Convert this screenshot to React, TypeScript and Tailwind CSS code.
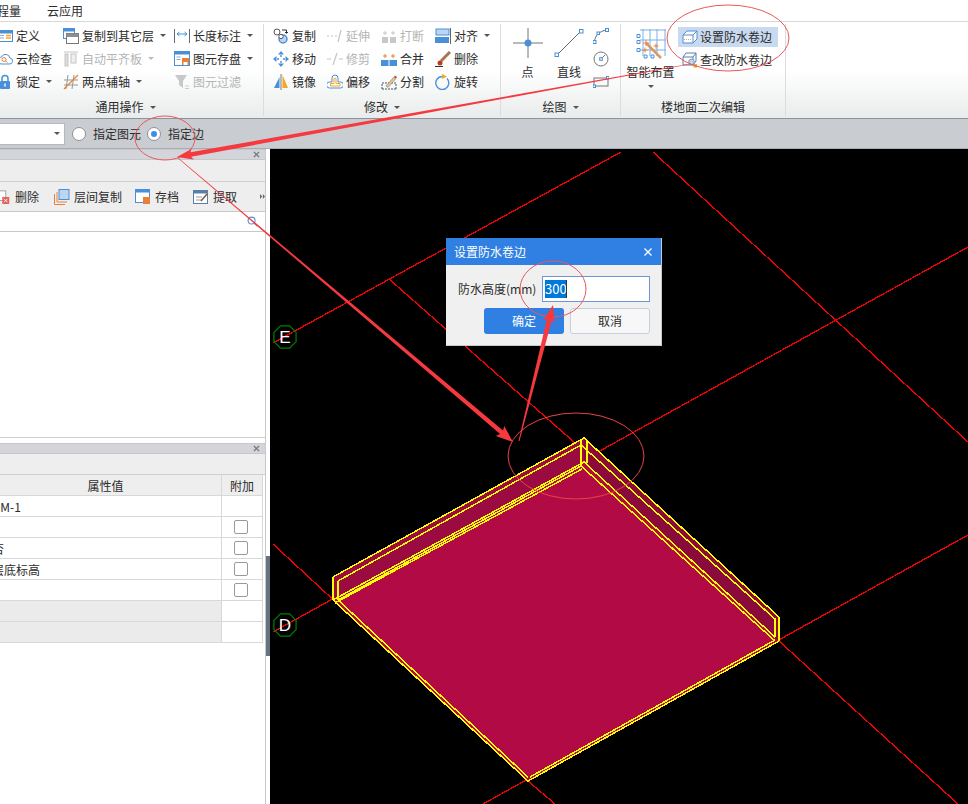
import type { ReactNode } from 'react';

const BLUE = '#4a90d9';
const ORANGE = '#f5a623';
const GRAY = '#c4c4c4';

function Ico({ children, className = 'w-4 h-4' }: { children: ReactNode; className?: string }) {
  return (
    <svg viewBox="0 0 16 16" className={`${className} shrink-0`} fill="none">
      {children}
    </svg>
  );
}

function Caret({ className = '' }: { className?: string }) {
  return <span className={`inline-block w-0 h-0 border-x-[3px] border-x-transparent border-t-[3px] border-t-[#555] ${className}`} />;
}

const icons: Record<string, ReactNode> = {
  define: (
    <>
      <rect x="0.5" y="2.5" width="15" height="11" fill="#fff" stroke={BLUE} />
      <rect x="0.5" y="2.5" width="15" height="3" fill={BLUE} />
      <path d="M9 7.5h5M9 10h5" stroke={ORANGE} strokeWidth="1.4" />
      <path d="M2 7.5h5M2 10h5" stroke="#9ab" />
    </>
  ),
  cloud: (
    <>
      <path d="M4 13h8a3 3 0 0 0 1-6 4.5 4.5 0 0 0-8.500-1A3.500 3.500 0 0 0 4 13z" stroke={BLUE} fill="#fff" />
      <circle cx="7" cy="8.500" r="2" stroke="#e8803a" />
      <path d="M8.500 10l2 1.500" stroke="#e8803a" />
    </>
  ),
  lock: (
    <>
      <path d="M5 7V4.500a3 3 0 0 1 6 0V7" stroke={BLUE} strokeWidth="1.500" />
      <rect x="3" y="7" width="10" height="8" rx="1" fill={BLUE} />
      <rect x="7.300" y="9.500" width="1.400" height="3" fill="#fff" />
    </>
  ),
  copyLayer: (
    <>
      <rect x="0.500" y="0.500" width="11" height="10" fill="#fff" stroke={BLUE} />
      <rect x="0.500" y="0.500" width="11" height="3" fill={BLUE} />
      <rect x="3.500" y="5.500" width="12" height="10" fill="#fff" stroke="#777" />
      <rect x="3.500" y="5.500" width="12" height="3.500" fill="#8a8f96" />
    </>
  ),
  autoFlush: (
    <>
      <path d="M1 1h14" stroke={GRAY} />
      <rect x="2" y="3" width="3" height="12" fill="#ddd" stroke={GRAY} />
      <rect x="8" y="3" width="5" height="9" fill="#eee" stroke={GRAY} />
    </>
  ),
  twoPoint: (
    <>
      <path d="M5 1l-2 14M11 1L9 15M1 6h14M1 11h14" stroke="#999" />
      <path d="M1 15L15 1" stroke="#e8803a" strokeWidth="1.200" />
    </>
  ),
  lengthMark: (
    <>
      <path d="M0.500 1v14M15.500 1v14" stroke="#5a6a7a" />
      <path d="M3 6h10M3 6l2.500-2M3 6l2.500 2M13 6l-2.500-2M13 6l-2.500 2" stroke={BLUE} />
    </>
  ),
  saveEl: (
    <>
      <rect x="0.500" y="0.500" width="15" height="14" fill="#fff" stroke={BLUE} />
      <rect x="0.500" y="0.500" width="15" height="3" fill={BLUE} />
      <path d="M2.500 6h4M2.500 8.500h4" stroke="#9ab" />
      <rect x="8" y="7" width="7" height="7" fill="#e8803a" />
      <rect x="9.500" y="11" width="4" height="3" fill="#fff" />
    </>
  ),
  funnel: (
    <>
      <path d="M1 1h12L9 7v7L5 11V7z" fill="#c8c8c8" />
      <path d="M11 12h4M11 14.500h4" stroke="#ccc" />
    </>
  ),
  copy: (
    <>
      <circle cx="4" cy="4" r="3" fill="#fff" stroke="#555" />
      <circle cx="10" cy="11" r="4" fill="#bcd6f2" stroke={BLUE} strokeWidth="1.500" />
      <circle cx="8" cy="8.500" r="2.200" fill="#fff" stroke="#555" />
      <path d="M9 2h4.500v3M12 4l1.500 1.500L15 4" stroke="#333" />
    </>
  ),
  extend: <path d="M0 8h2M4 8h2M8 8h2M14 2l-3 12" stroke={GRAY} strokeWidth="1.200" />,
  trim: <path d="M0 8h4M12 8h4M10 2L6 14" stroke={GRAY} strokeWidth="1.200" />,
  breakIcon: (
    <>
      <rect x="1" y="9" width="6" height="6" fill="#c8c8c8" />
      <rect x="9" y="9" width="6" height="6" fill="#c8c8c8" />
      <path d="M4 3v4M2 5h4M12 3v4M10 5h4" stroke="#c8c8c8" />
    </>
  ),
  merge: (
    <>
      <rect x="0" y="9" width="16" height="6" fill={BLUE} />
      <path d="M8 9v6" stroke="#fff" />
      <path d="M4 3v4M2 5h4M12 3v4M10 5h4" stroke="#e8803a" />
    </>
  ),
  align: (
    <>
      <rect x="1" y="1" width="13" height="6" fill="#bcd6f2" stroke={BLUE} />
      <rect x="0" y="9" width="14" height="6" fill={BLUE} />
      <path d="M15.500 0v16" stroke="#666" />
    </>
  ),
  erase: (
    <>
      <path d="M0 15.500h8" stroke="#333" />
      <path d="M15 1l-9 9" stroke="#a8764a" strokeWidth="3" />
      <circle cx="5" cy="12" r="2.500" fill="#b5401f" />
    </>
  ),
  move: (
    <>
      <path d="M8 0l3 3.500H5zM8 16l3-3.500H5zM0 8l3.500-3v6zM16 8l-3.500-3v6z" fill={BLUE} />
      <path d="M8 4v2M8 10v2M4 8h2M10 8h2" stroke={BLUE} strokeWidth="1.400" />
    </>
  ),
  mirror: (
    <>
      <path d="M6.500 3L1 14h5.500z" fill={BLUE} />
      <path d="M9.500 1L15 14H9.500z" fill={ORANGE} />
      <path d="M8 0v16" stroke="#777" />
    </>
  ),
  offset: (
    <>
      <path d="M5 8V4a3 3 0 0 1 6 0v4h2.500a2 2 0 0 1 0 6h-11a2 2 0 0 1 0-6z" stroke={BLUE} fill="#fff" />
      <path d="M7 9.500V5a1 1 0 0 1 2 0v4.500h4v2.500H3.500V9.500z" stroke={ORANGE} fill="#fff" />
    </>
  ),
  split: (
    <>
      <path d="M1 15h14M1 15V9M15 15V9M1 9h14" stroke="#44536a" strokeDasharray="2 1" />
      <path d="M5 12L13 3l2 1.500-8 9z" fill="#e9c58a" stroke="#777" strokeWidth="0.600" />
      <path d="M13 3l2 1.500 1-1.500-2-1.500z" fill="#d0453a" />
    </>
  ),
  rotate: (
    <>
      <path d="M7 2.500a6.500 6.500 0 1 0 5 2" stroke={BLUE} strokeWidth="1.400" />
      <path d="M7 0v5l5-2.500z" fill={ORANGE} />
    </>
  ),
};

function Tool({ icon, label, disabled, caret }: { icon: string; label: string; disabled?: boolean; caret?: boolean }) {
  return (
    <div className={`h-[23px] flex items-center gap-[3px] whitespace-nowrap ${disabled ? 'text-[#b4b4b4]' : 'text-[#2b2b2b]'}`}>
      <Ico>{icons[icon]}</Ico>
      <span>{label}</span>
      {caret && <Caret className={`ml-[3px] ${disabled ? 'opacity-40' : ''}`} />}
    </div>
  );
}

function ToolCol({ width, items }: { width: string; items: { icon: string; label: string; disabled?: boolean; caret?: boolean }[] }) {
  return (
    <div className={`${width} flex flex-col shrink-0`}>
      {items.map((it) => (
        <Tool key={it.label} {...it} />
      ))}
    </div>
  );
}

function GroupLabel({ text, caret = true }: { text: string; caret?: boolean }) {
  return (
    <div className="h-[18px] mt-[2px] flex items-center justify-center gap-[6px] text-[#2b2b2b]">
      <span>{text}</span>
      {caret && <Caret />}
    </div>
  );
}

function Ribbon() {
  return (
    <div className="h-[97px] flex bg-gradient-to-b from-white via-white to-[#e9ecec] border-b border-[#8f9296] pt-[2px] shrink-0">
      {/* 通用操作 */}
      <div className="w-[276px] -ml-[12px] shrink-0 border-r border-[#dcdcdc] flex flex-col mb-[2px]">
        <div className="flex h-[72px] pl-[9px]">
          <ToolCol
            width="w-[66px]"
            items={[
              { icon: 'define', label: '定义' },
              { icon: 'cloud', label: '云检查' },
              { icon: 'lock', label: '锁定', caret: true },
            ]}
          />
          <ToolCol
            width="w-[111px]"
            items={[
              { icon: 'copyLayer', label: '复制到其它层', caret: true },
              { icon: 'autoFlush', label: '自动平齐板', disabled: true, caret: true },
              { icon: 'twoPoint', label: '两点辅轴', caret: true },
            ]}
          />
          <ToolCol
            width="w-[88px]"
            items={[
              { icon: 'lengthMark', label: '长度标注', caret: true },
              { icon: 'saveEl', label: '图元存盘', caret: true },
              { icon: 'funnel', label: '图元过滤', disabled: true },
            ]}
          />
        </div>
        <GroupLabel text="通用操作" />
      </div>

      {/* 修改 */}
      <div className="w-[237px] shrink-0 border-r border-[#dcdcdc] flex flex-col mb-[2px]">
        <div className="flex h-[72px] pl-[9px]">
          <ToolCol
            width="w-[54px]"
            items={[
              { icon: 'copy', label: '复制' },
              { icon: 'move', label: '移动' },
              { icon: 'mirror', label: '镜像' },
            ]}
          />
          <ToolCol
            width="w-[54px]"
            items={[
              { icon: 'extend', label: '延伸', disabled: true },
              { icon: 'trim', label: '修剪', disabled: true },
              { icon: 'offset', label: '偏移' },
            ]}
          />
          <ToolCol
            width="w-[54px]"
            items={[
              { icon: 'breakIcon', label: '打断', disabled: true },
              { icon: 'merge', label: '合并' },
              { icon: 'split', label: '分割' },
            ]}
          />
          <ToolCol
            width="w-[62px]"
            items={[
              { icon: 'align', label: '对齐', caret: true },
              { icon: 'erase', label: '删除' },
              { icon: 'rotate', label: '旋转' },
            ]}
          />
        </div>
        <GroupLabel text="修改" />
      </div>

      {/* 绘图 */}
      <div className="w-[120px] shrink-0 border-r border-[#dcdcdc] flex flex-col mb-[2px]">
        <div className="flex h-[72px] text-[#2b2b2b]">
          <div className="w-[52px] flex flex-col items-center pl-[1px] shrink-0">
            <svg viewBox="0 0 30 30" className="w-[30px] h-[30px] mt-[4px]" fill="none">
              <path d="M0 15h30M15 0v30" stroke="#777" />
              <circle cx="15" cy="15" r="3.500" fill={BLUE} />
            </svg>
            <span className="mt-[6px]">点</span>
          </div>
          <div className="w-[32px] flex flex-col items-center shrink-0">
            <svg viewBox="0 0 30 30" className="w-[30px] h-[30px] mt-[4px]" fill="none">
              <path d="M3 27L27 3" stroke="#666" />
              <rect x="1" y="25" width="3.500" height="3.500" fill="#fff" stroke={BLUE} />
              <rect x="25.500" y="1.500" width="3.500" height="3.500" fill="#fff" stroke={BLUE} />
            </svg>
            <span className="mt-[6px]">直线</span>
          </div>
          <div className="flex flex-col items-center pl-[8px]">
            <div className="h-[23px] flex items-center">
              <Ico>
                <path d="M1.500 14c0-6 5-11 12-12" stroke="#667" />
                <rect x="0" y="12.500" width="3" height="3" fill="#fff" stroke={BLUE} />
                <rect x="12.500" y="0.500" width="3" height="3" fill="#fff" stroke={BLUE} />
                <rect x="4" y="4" width="2.500" height="2.500" fill="#fff" stroke={BLUE} />
              </Ico>
            </div>
            <div className="h-[23px] flex items-center">
              <Ico>
                <circle cx="8" cy="8" r="7" stroke="#777" />
                <path d="M8 8l4-4" stroke="#777" />
                <rect x="6.700" y="6.700" width="2.600" height="2.600" fill="#fff" stroke={BLUE} />
              </Ico>
            </div>
            <div className="h-[23px] flex items-center">
              <svg viewBox="0 0 16 12" className="w-4 h-3" fill="none">
                <rect x="1" y="2" width="14" height="8" stroke="#777" />
                <rect x="0" y="9" width="2.500" height="2.500" fill="#fff" stroke={BLUE} />
                <rect x="13.500" y="0.500" width="2.500" height="2.500" fill="#fff" stroke={BLUE} />
              </svg>
            </div>
          </div>
        </div>
        <GroupLabel text="绘图" />
      </div>

      {/* 楼地面二次编辑 */}
      <div className="w-[165px] shrink-0 border-r border-[#dcdcdc] flex flex-col mb-[2px]">
        <div className="flex h-[72px] text-[#2b2b2b]">
          <div className="w-[57px] pl-[4px] pr-[2px] flex flex-col items-center shrink-0">
            {/* 网格和魔棒 */}
            <svg viewBox="635 30 32 32" className="w-[32px] h-[32px] mt-[4px]" fill="none">
              <path d="M643 31v27M650 31v27M657 31v27M665 31v27M640 32h26M640 42h26M640 52h26" stroke="#7fb0e4" />
              <path d="M637 36.500h3v3h-3zM637 42.500h3v3h-3zM637 50.500h3v3h-3zM644 57h3v3h-3zM651 57h3v3h-3z" fill="#fff" stroke={BLUE} />
              <path d="M646 45l15 15" stroke="#d99a66" strokeWidth="2.500" />
              <path d="M646 42v6M643 45h6M645 49.500v5M642.500 52h5M656 45.500v5M653.500 48h5" stroke="#e8803a" />
            </svg>
            <span className="mt-[4px] whitespace-nowrap">智能布置</span>
            <Caret className="mt-[5px]" />
          </div>
          <div className="flex flex-col pt-[3px]">
            <div className="w-[100px] h-[20px] bg-[#c9daf0] flex items-center gap-[2px] pl-[4px] whitespace-nowrap">
              <Ico>
                <path d="M1 6l4-4h10v8l-4 4H1z" fill="#fff" stroke={BLUE} />
                <path d="M1 6h10v8M11 6l4-4" stroke={BLUE} />
                <path d="M2 10.500h8" stroke="#e8a26a" strokeDasharray="1 1" />
              </Ico>
              <span>设置防水卷边</span>
            </div>
            <div className="h-[23px] mt-[1px] flex items-center gap-[2px] pl-[4px] whitespace-nowrap">
              <Ico>
                <path d="M1 5l3-4h10v8l-3 4H1z" fill="#fff" stroke="#5b7ea8" />
                <path d="M1 5h10v8M11 5l3-4" stroke="#5b7ea8" />
                <circle cx="9.500" cy="10" r="2.800" fill="#c7d6e8" stroke="#7b98b8" />
                <rect x="11.500" y="12" width="3.500" height="3.500" fill={ORANGE} />
              </Ico>
              <span>查改防水卷边</span>
            </div>
          </div>
        </div>
        <GroupLabel text="楼地面二次编辑" caret={false} />
      </div>
    </div>
  );
}

function PanelHeader() {
  return (
    <div className="h-[11px] bg-[#d3d5da] border-y border-[#c6c8cc] flex items-center justify-end pr-[5px] shrink-0">
      <svg viewBox="0 0 8 8" className="w-[7px] h-[7px]">
        <path d="M1 1l6 6M7 1L1 7" stroke="#777" strokeWidth="1.500" />
      </svg>
    </div>
  );
}

function PanelToolButton({ label, className, children }: { label: string; className: string; children: ReactNode }) {
  return (
    <div className={`flex items-center gap-[4px] shrink-0 ${className}`}>
      {children}
      <span>{label}</span>
    </div>
  );
}

const rows = [
  { value: 'DM-1', check: false, gray: false },
  { value: '', check: true, gray: false },
  { value: '否', check: true, gray: false },
  { value: '层底标高', check: true, gray: false },
  { value: '', check: true, gray: false },
  { value: '', check: false, gray: true },
  { value: '', check: false, gray: true },
];

function LeftPanels() {
  return (
    <div className="w-[266px] shrink-0 border-r border-[#c8c8c8] bg-white flex flex-col overflow-hidden text-[#2b2b2b]">
      <div className="h-[289px] flex flex-col border-b border-[#d0d0d0] shrink-0">
        <PanelHeader />
        <div className="h-[22px] bg-[#eeeeee] border-b border-[#d0d0d0] shrink-0" />
        <div className="h-[30px] bg-[#eeeeee] border-b border-[#c8c8c8] flex items-center shrink-0 -ml-[3px] relative">
          <PanelToolButton label="删除" className="w-[57px]">
            <Ico className="w-[14px] h-[14px]">
              <rect x="1" y="1" width="9" height="11" stroke="#999" fill="#fff" />
              <rect x="6" y="8" width="8" height="8" fill="#e4615a" />
              <path d="M8 10l4 4M12 10l-4 4" stroke="#fff" />
            </Ico>
          </PanelToolButton>
          <PanelToolButton label="层间复制" className="w-[81px]">
            <Ico>
              <rect x="5" y="0.500" width="10" height="10" fill="#bcd6f2" stroke={BLUE} />
              <path d="M3 3v10h10M0.500 5v10.500H11" stroke="#e8803a" />
            </Ico>
          </PanelToolButton>
          <PanelToolButton label="存档" className="w-[58px]">
            <Ico>
              <rect x="0.500" y="0.500" width="14" height="13" fill="#fff" stroke={BLUE} />
              <rect x="0.500" y="0.500" width="14" height="3" fill={BLUE} />
              <rect x="8" y="8" width="7" height="7" fill="#e8803a" />
            </Ico>
          </PanelToolButton>
          <PanelToolButton label="提取" className="w-[67px]">
            <Ico>
              <rect x="0.500" y="1.500" width="14" height="13" fill="#fff" stroke="#5b7ea8" />
              <rect x="0.500" y="1.500" width="14" height="3" fill="#5b7ea8" />
              <path d="M3 8h6M3 11h5" stroke="#99a" />
              <path d="M8 12l6-7" stroke="#7a5a3a" strokeWidth="1.500" />
            </Ico>
          </PanelToolButton>
          <svg viewBox="0 0 7 7" className="w-[7px] h-[7px]">
            <path d="M0 0l3 3.500L0 7zM4 0l3 3.500L4 7z" fill="#666" />
          </svg>
        </div>
        <div className="h-[20px] border-b border-[#c8c8c8] flex items-center justify-end pr-[7px] shrink-0">
          <svg viewBox="0 0 12 12" className="w-[11px] h-[11px]" fill="none">
            <circle cx="5" cy="5" r="3.800" stroke="#5b93d3" strokeWidth="1.200" />
            <path d="M8 8l3 3" stroke="#5b93d3" strokeWidth="1.200" />
          </svg>
        </div>
      </div>

      <div className="h-[5px] shrink-0" />
      <PanelHeader />
      <div className="h-[21px] bg-[#eeeeee] border-b border-[#d0d0d0] shrink-0" />
      <div className="-ml-[10px] w-[273px] border-b border-[#d8d8d8] flex h-[21px] bg-[#eeeeee] shrink-0">
        <div className="w-[232px] text-center leading-[22px] border-r border-[#d8d8d8]">属性值</div>
        <div className="w-[41px] text-center leading-[22px] border-r border-[#d8d8d8]">附加</div>
      </div>
      {rows.map((r, i) => (
        <div key={i} className="-ml-[10px] w-[273px] h-[21px] border-b border-[#d8d8d8] flex shrink-0">
          <div className={`w-[232px] pl-[2px] leading-[22px] border-r border-[#d8d8d8] ${r.gray ? 'bg-[#ebebeb]' : ''}`}>{r.value}</div>
          <div className="w-[41px] border-r border-[#d8d8d8] flex items-center pl-[12px]">
            {r.check && <span className="w-[14px] h-[14px] rounded-[2px] border border-[#999] bg-white" />}
          </div>
        </div>
      ))}
    </div>
  );
}

function AxisTag({ x, y, letter }: { x: number; y: number; letter: string }) {
  const pts = Array.from({ length: 8 }, (_, i) => {
    const a = (Math.PI / 4) * i + Math.PI / 8;
    return `${x + 12 * Math.cos(a)},${y + 12 * Math.sin(a)}`;
  }).join(' ');
  return (
    <>
      <polygon points={pts} stroke="#008000" strokeWidth="1.200" fill="none" />
      <text x={x} y={y + 6} textAnchor="middle" fontSize="17" fill="#fff" fontFamily="'Liberation Sans', sans-serif">
        {letter}
      </text>
    </>
  );
}

const gridLines = [
  [273, 343, 621, 152],
  [273, 632, 968, 247],
  [483, 804, 968, 535],
  [653, 152, 968, 442],
  [389, 279, 600, 465],
  [273, 544, 340, 606],
  [528, 781, 555, 804],
  [779, 641, 958, 804],
];

const yellowLines = [
  // 左墙
  [333, 577, 584, 438],
  [338, 581, 581, 445],
  [333, 600, 584, 462],
  [338, 600, 581, 466],
  [335, 603, 582, 469],
  // 右墙
  [584, 438, 779, 617],
  [581, 445, 774, 618],
  [584, 462, 775, 637],
  [581, 466, 774, 640],
  // 立边
  [333, 577, 333, 600],
  [338, 581, 338, 600],
  [779, 617, 779, 641],
  [775, 618, 775, 637],
  [581, 440, 581, 466],
  [587, 441, 587, 463],
  // 底边
  [333, 600, 528, 781],
  [338, 600, 528, 777],
  [528, 781, 779, 641],
  [530, 777, 775, 640],
];

function Scene() {
  return (
    <svg viewBox="270 149 698 655" className="w-[698px] h-[655px] block">
      {gridLines.map(([a, b, c, d], i) => (
        <line key={i} x1={a} y1={b} x2={c} y2={d} stroke="#f00000" strokeWidth="1.300" shapeRendering="crispEdges" />
      ))}
      <polygon points="333,600 528,781 779,641 584,462" fill="#b20a44" />
      <polygon points="333,577 584,438 584,462 333,600" fill="#9b0a40" />
      <polygon points="584,438 779,617 779,641 584,462" fill="#8a0a3c" />
      {yellowLines.map(([a, b, c, d], i) => (
        <line key={i} x1={a} y1={b} x2={c} y2={d} stroke="#ffff00" strokeWidth="1.500" shapeRendering="crispEdges" />
      ))}
      <AxisTag x={285} y={337} letter="E" />
      <AxisTag x={285} y={625} letter="D" />
    </svg>
  );
}

function arrow(tx: number, ty: number, hx: number, hy: number, tailW: number, shaftW: number, headLen: number, headW: number) {
  const len = Math.hypot(hx - tx, hy - ty);
  const ux = (hx - tx) / len;
  const uy = (hy - ty) / len;
  const nx = -uy;
  const ny = ux;
  const bx = hx - ux * headLen;
  const by = hy - uy * headLen;
  const p = (x: number, y: number, w: number) => `${x + nx * w},${y + ny * w}`;
  return [
    p(tx, ty, tailW / 2),
    p(bx, by, shaftW / 2),
    p(bx - ux * 2, by - uy * 2, headW / 2),
    p(hx, hy, 0),
    p(bx - ux * 2, by - uy * 2, -headW / 2),
    p(bx, by, -shaftW / 2),
    p(tx, ty, -tailW / 2),
  ].join(' ');
}

function Annotations() {
  return (
    <svg viewBox="0 0 968 804" className="absolute inset-0 w-[968px] h-[804px] pointer-events-none" fill="none">
      <ellipse cx="728" cy="38" rx="61" ry="33" stroke="#e8585e" />
      <ellipse cx="165" cy="138" rx="30" ry="22" stroke="#e8585e" />
      <ellipse cx="553" cy="289" rx="33" ry="28" stroke="#e8585e" />
      <ellipse cx="576" cy="456" rx="68" ry="43" stroke="#e8444a" />
      <polygon points={arrow(690, 64, 177, 157, 0.4, 4.5, 14, 11)} fill="#f5393f" />
      <polygon points={arrow(178, 158, 513, 442, 0.5, 4.5, 15, 13)} fill="#f5393f" />
      <polygon points={arrow(519, 441, 553, 305, 1, 5, 15, 12)} fill="#f5393f" />
    </svg>
  );
}

function Dialog() {
  return (
    <div className="absolute left-[176px] top-[89px] w-[216px] h-[108px] bg-[#f0f0f0] border-r border-b border-[#c5c9d2] text-[#2b2b2b] flex flex-col">
      <div className="h-[27px] bg-[#2f80e2] text-white flex items-center justify-between pl-[8px] pr-[9px] shrink-0">
        <span>设置防水卷边</span>
        <svg viewBox="0 0 8 8" className="w-[8px] h-[8px]">
          <path d="M0.500 0.500l7 7M7.500 0.500l-7 7" stroke="#fff" strokeWidth="1.300" />
        </svg>
      </div>
      <div className="flex items-center pl-[12px] mt-[11px]">
        <span className="w-[84px] whitespace-nowrap">防水高度(mm)</span>
        <div className="w-[108px] h-[26px] bg-white border border-[#6d95d6] flex items-center pl-[2px]">
          <span className="bg-[#0078d7] text-white text-[13px] leading-[18px] w-[21px] text-center">300</span>
          <span className="w-px h-[18px] bg-[#333]" />
        </div>
      </div>
      <div className="flex gap-[6px] pl-[38px] mt-[6px]">
        <div className="w-[80px] h-[26px] rounded-[3px] bg-[#2f80e2] text-white flex items-center justify-center">确定</div>
        <div className="w-[80px] h-[26px] rounded-[3px] bg-[#f7f7f7] border border-[#c5cfdd] flex items-center justify-center">取消</div>
      </div>
    </div>
  );
}

export default function App() {
  return (
    <div className="relative w-[968px] h-[804px] overflow-hidden flex flex-col bg-white text-[12px] leading-[16px] font-['Noto_Sans_CJK_SC','Liberation_Sans',sans-serif]">
      {/* 菜单栏 */}
      <div className="h-[22px] border-b border-[#d8d8d8] flex items-center text-[#2b2b2b] shrink-0 whitespace-nowrap">
        <span className="-ml-[15px]">工程量</span>
        <span className="ml-[26px]">云应用</span>
      </div>

      <Ribbon />

      {/* 属性条 */}
      <div className="h-[30px] bg-[#c9ccd0] border-b border-[#a9acb0] flex items-center text-[#2b2b2b] shrink-0 whitespace-nowrap">
        <div className="w-[65px] h-[22px] bg-white border border-[#b5b8bc] border-l-0 flex items-center justify-end pr-[4px]">
          <Caret />
        </div>
        <span className="w-[14px] h-[14px] rounded-full bg-white border border-[#8f9296] ml-[7px]" />
        <span className="ml-[7px]">指定图元</span>
        <span className="w-[14px] h-[14px] rounded-full bg-white border border-[#8f9296] ml-[6px] flex items-center justify-center">
          <span className="w-[6px] h-[6px] rounded-full bg-[#3d8ce8]" />
        </span>
        <span className="ml-[7px]">指定边</span>
      </div>

      <div className="flex flex-1 min-h-0">
        <LeftPanels />
        <div className="w-[4px] shrink-0 bg-white">
          <div className="w-[4px] h-[100px] mt-[407px] bg-[#667280]" />
        </div>
        <div className="relative flex-1 bg-black overflow-hidden">
          <Scene />
          <Dialog />
        </div>
      </div>

      <Annotations />
    </div>
  );
}
